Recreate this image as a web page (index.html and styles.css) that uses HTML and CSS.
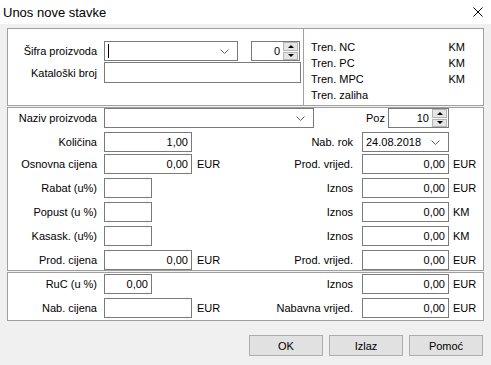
FILE: index.html
```html
<!DOCTYPE html>
<html lang="hr">
<head>
    <meta charset="UTF-8">
    <meta name="viewport" content="width=device-width, initial-scale=1.0">
    <title>Unos nove stavke</title>
    <link rel="stylesheet" href="styles.css">
</head>
<body>
    <div class="dialog">
        <div class="titlebar">
            <span class="title">Unos nove stavke</span>
            <svg class="close" width="10" height="10" viewBox="0 0 10 10">
                <path d="M0.5 0.5L9.5 9.5M9.5 0.5L0.5 9.5" stroke="#000" stroke-width="1" fill="none"/>
            </svg>
        </div>
        <div class="content">
            <div class="group top-group">
                <div class="product">
                    <div class="prow">
                        <span class="lbl">Šifra proizvoda</span>
                        <div class="field combo code-combo">
                            <span class="caret"></span>
                            <svg class="chev" width="9" height="5" viewBox="0 0 9 5"><path d="M0.5 0.5L4.5 4.5L8.5 0.5" fill="none" stroke="#606060"/></svg>
                        </div>
                        <div class="field spin code-spin">
                            <span class="val">0</span>
                            <span class="arrows"><b class="up"></b><b class="down"></b></span>
                        </div>
                    </div>
                    <div class="prow second">
                        <span class="lbl">Kataloški broj</span>
                        <div class="field catalog"></div>
                    </div>
                </div>
                <div class="info">
                    <div class="info-row"><span>Tren. NC</span><span class="cur">KM</span></div>
                    <div class="info-row"><span>Tren. PC</span><span class="cur">KM</span></div>
                    <div class="info-row"><span>Tren. MPC</span><span class="cur">KM</span></div>
                    <div class="info-row"><span>Tren. zaliha</span></div>
                </div>
            </div>

            <div class="group main-group">
                <div class="frow">
                    <span class="lbl">Naziv proizvoda</span>
                    <div class="field combo name-combo">
                        <svg class="chev" width="9" height="5" viewBox="0 0 9 5"><path d="M0.5 0.5L4.5 4.5L8.5 0.5" fill="none" stroke="#606060"/></svg>
                    </div>
                    <div class="poz">
                        <span>Poz</span>
                        <div class="field spin poz-spin">
                            <span class="val">10</span>
                            <span class="arrows"><b class="up"></b><b class="down"></b></span>
                        </div>
                    </div>
                </div>
                <div class="frow">
                    <span class="lbl">Količina</span>
                    <div class="field num">1,00</div>
                    <span class="unit"></span>
                    <span class="lbl-r">Nab. rok</span>
                    <div class="field combo date">
                        <span>24.08.2018</span>
                        <svg class="chev" width="9" height="5" viewBox="0 0 9 5"><path d="M0.5 0.5L4.5 4.5L8.5 0.5" fill="none" stroke="#606060"/></svg>
                    </div>
                </div>
                <div class="frow tight">
                    <span class="lbl">Osnovna cijena</span>
                    <div class="field num">0,00</div>
                    <span class="unit">EUR</span>
                    <span class="lbl-r">Prod. vrijed.</span>
                    <div class="field num">0,00</div>
                    <span class="unit-r">EUR</span>
                </div>
                <div class="frow">
                    <span class="lbl">Rabat (u%)</span>
                    <div class="field num short"></div>
                    <span class="unit"></span>
                    <span class="lbl-r">Iznos</span>
                    <div class="field num">0,00</div>
                    <span class="unit-r">EUR</span>
                </div>
                <div class="frow">
                    <span class="lbl">Popust (u %)</span>
                    <div class="field num short"></div>
                    <span class="unit"></span>
                    <span class="lbl-r">Iznos</span>
                    <div class="field num">0,00</div>
                    <span class="unit-r">KM</span>
                </div>
                <div class="frow">
                    <span class="lbl">Kasask. (u%)</span>
                    <div class="field num short"></div>
                    <span class="unit"></span>
                    <span class="lbl-r">Iznos</span>
                    <div class="field num">0,00</div>
                    <span class="unit-r">KM</span>
                </div>
                <div class="frow">
                    <span class="lbl">Prod. cijena</span>
                    <div class="field num">0,00</div>
                    <span class="unit">EUR</span>
                    <span class="lbl-r">Prod. vrijed.</span>
                    <div class="field num">0,00</div>
                    <span class="unit-r">EUR</span>
                </div>
            </div>

            <div class="group bottom-group">
                <div class="frow first">
                    <span class="lbl">RuC (u %)</span>
                    <div class="field num short">0,00</div>
                    <span class="unit"></span>
                    <span class="lbl-r">Iznos</span>
                    <div class="field num">0,00</div>
                    <span class="unit-r">EUR</span>
                </div>
                <div class="frow">
                    <span class="lbl">Nab. cijena</span>
                    <div class="field num"></div>
                    <span class="unit">EUR</span>
                    <span class="lbl-r">Nabavna vrijed.</span>
                    <div class="field num">0,00</div>
                    <span class="unit-r">EUR</span>
                </div>
            </div>
        </div>
        <div class="buttons">
            <button type="button">OK</button>
            <button type="button">Izlaz</button>
            <button type="button">Pomoć</button>
        </div>
    </div>
</body>
</html>
```

FILE: styles.css
```css
body {
    margin: 0;
    background-color: #f0f0f0;
    font-family: "Liberation Sans", Arial, sans-serif;
    font-size: 11px;
    color: #000;
}
.dialog {
    width: 491px;
    height: 365px;
    background-color: #f0f0f0;
}
.titlebar {
    height: 24px;
    background-color: #fff;
    display: flex;
    align-items: center;
    justify-content: space-between;
    padding: 0 8px 0 3px;
}
.title { font-size: 13px; }
.close { display: block; }
.content { padding: 4px 7px 0 7px; }

.group {
    border: 1px solid #a0a0a0;
    background-color: #fff;
}
.top-group {
    height: 76px;
    display: flex;
}
.product {
    width: 295px;
    padding-top: 12px;
    border-right: 1px solid #a0a0a0;
}
.prow {
    display: flex;
    align-items: center;
    height: 20px;
}
.prow.second { margin-top: 1px; height: 21px; }
.lbl {
    width: 89px;
    padding-right: 7px;
    text-align: right;
    white-space: nowrap;
}
.field {
    box-sizing: border-box;
    height: 20px;
    border: 1px solid #7a7a7a;
    background-color: #fff;
}
.combo {
    display: flex;
    align-items: center;
    justify-content: space-between;
    padding: 0 8px 0 3px;
}
.chev { display: block; margin-left: auto; }
.caret {
    width: 1px;
    height: 14px;
    background-color: #000;
}
.code-combo { width: 134px; }
.code-spin { width: 49px; margin-left: 13px; }
.catalog { width: 197px; height: 21px; }

.spin { display: flex; }
.spin .val {
    flex: 1;
    text-align: right;
    padding-right: 3px;
    line-height: 18px;
}
.arrows {
    display: flex;
    flex-direction: column;
    gap: 1px;
    width: 15px;
    padding: 0 1px 0 0;
}
.arrows b {
    flex: 1;
    display: flex;
    align-items: center;
    justify-content: center;
    background-color: #e5e5e5;
    border: 1px solid #b4b4b4;
}
.arrows .up::after {
    content: "";
    border-left: 3px solid transparent;
    border-right: 3px solid transparent;
    border-bottom: 3px solid #000;
}
.arrows .down::after {
    content: "";
    border-left: 3px solid transparent;
    border-right: 3px solid transparent;
    border-top: 3px solid #000;
}

.info {
    flex: 1;
    padding: 10px 18px 0 7px;
}
.info-row {
    display: flex;
    justify-content: space-between;
    line-height: 16px;
}

.main-group { margin-top: 1px; }
.frow {
    display: grid;
    grid-template-columns: 96px 88px 40px 130px 87px 1fr;
    align-items: center;
    height: 20px;
    margin-top: 4px;
}
.main-group .frow:first-child { margin-top: 0; }
.frow.tight { margin-top: 2px; }
.frow .lbl { width: auto; }
.num {
    text-align: right;
    padding-right: 3px;
    line-height: 18px;
}
.short { width: 48px; }
.unit { padding-left: 5px; }
.lbl-r {
    text-align: right;
    padding-right: 9px;
    white-space: nowrap;
}
.unit-r { padding-left: 4px; }
.name-combo {
    grid-column: 2 / 5;
    width: 210px;
}
.poz {
    display: flex;
    align-items: center;
    justify-content: flex-end;
    gap: 3px;
}
.poz-spin { width: 61px; }
.date { padding-left: 3px; }

.bottom-group {
    margin-top: 1px;
    padding: 1px 0 2px;
}
.bottom-group .frow.first { margin-top: 0; }

.buttons {
    display: flex;
    justify-content: flex-end;
    gap: 6px;
    padding: 14px 8px 0 0;
}
button {
    width: 74px;
    height: 21px;
    background-color: #e1e1e1;
    border: 1px solid #adadad;
    font-family: "Liberation Sans", Arial, sans-serif;
    font-size: 11px;
    color: #000;
    padding: 0;
}
```
